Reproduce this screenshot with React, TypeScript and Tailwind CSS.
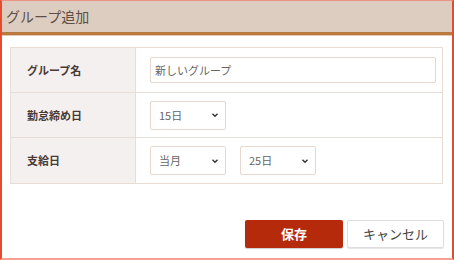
import React from "react";

const font = { fontFamily: '"Noto Sans CJK JP", "Noto Sans", sans-serif' };

function Chevron() {
  return (
    <svg width="8" height="6" viewBox="0 0 8 6" className="absolute right-[7px] top-1/2 -translate-y-1/2 pointer-events-none">
      <path d="M1.5 1.8 L4 4.2 L6.5 1.8" fill="none" stroke="#333" strokeWidth="1.4" />
    </svg>
  );
}

function Select({ value, options, width }: { value: string; options: string[]; width: string }) {
  return (
    <div className={`relative ${width} h-[29px]`}>
      <select
        defaultValue={value}
        className="appearance-none w-full h-full border border-[#e6d8ce] rounded-[2px] bg-white pl-[8px] text-[11px] text-[#666] outline-none"
        style={font}
      >
        {options.map((o) => (
          <option key={o}>{o}</option>
        ))}
      </select>
      <Chevron />
    </div>
  );
}

function Row({ label, children, last }: { label: string; children: React.ReactNode; last?: boolean }) {
  return (
    <div className={`flex h-[45px] ${last ? "" : "border-b border-[#e8ddd5]"}`}>
      <div className="w-[125px] shrink-0 bg-[#f5f0f0] border-r border-[#e8ddd5] flex items-center pl-[16px] text-[11px] font-bold text-[#4a3a35]">
        {label}
      </div>
      <div className="flex-1 flex items-center gap-[14px] pl-[14px] pr-[7px]">{children}</div>
    </div>
  );
}

export default function App() {
  const days = Array.from({ length: 31 }, (_, i) => `${i + 1}日`);
  return (
    <div className="w-[454px] h-[260px] bg-white" style={font}>
      <div className="w-[454px] h-[260px] border-l-2 border-r-2 border-l-[#e84a2e] border-r-[#e84a2e] border-t border-t-[#f09080] border-b-2 border-b-[#f5a090] flex flex-col">
        <div className="h-[31px] bg-[#dccdc0] flex items-center pl-[4px] text-[14px] text-[#5e4e46]">
          グループ追加
        </div>
        <div className="h-[3px] bg-[#b97a40]" />
        <div className="h-[1px] bg-[#e2c9b0]" />
        <div className="px-[8px] pt-[11px]">
          <div className="w-[433px] border border-[#e8ddd5]">
            <Row label="グループ名">
              <input
                defaultValue="新しいグループ"
                className="w-[286px] h-[26px] border border-[#e6d8ce] rounded-[2px] px-[4px] text-[11px] text-[#666] outline-none"
                style={font}
              />
            </Row>
            <Row label="勤怠締め日">
              <Select value="15日" options={days} width="w-[76px]" />
            </Row>
            <Row label="支給日" last>
              <Select value="当月" options={["前月", "当月", "翌月"]} width="w-[76px]" />
              <Select value="25日" options={days} width="w-[76px]" />
            </Row>
          </div>
        </div>
        <div className="flex justify-end gap-[4px] pr-[8px] mt-[36px]">
          <button className="w-[98px] h-[28px] bg-[#b62a0c] rounded-[2px] text-white text-[13px] font-bold shadow-[0_1px_1px_rgba(0,0,0,0.2)]">
            保存
          </button>
          <button className="w-[97px] h-[28px] bg-white border border-[#ddd] rounded-[2px] text-[#444] text-[13px] shadow-[0_1px_1px_rgba(0,0,0,0.1)]">
            キャンセル
          </button>
        </div>
      </div>
    </div>
  );
}
